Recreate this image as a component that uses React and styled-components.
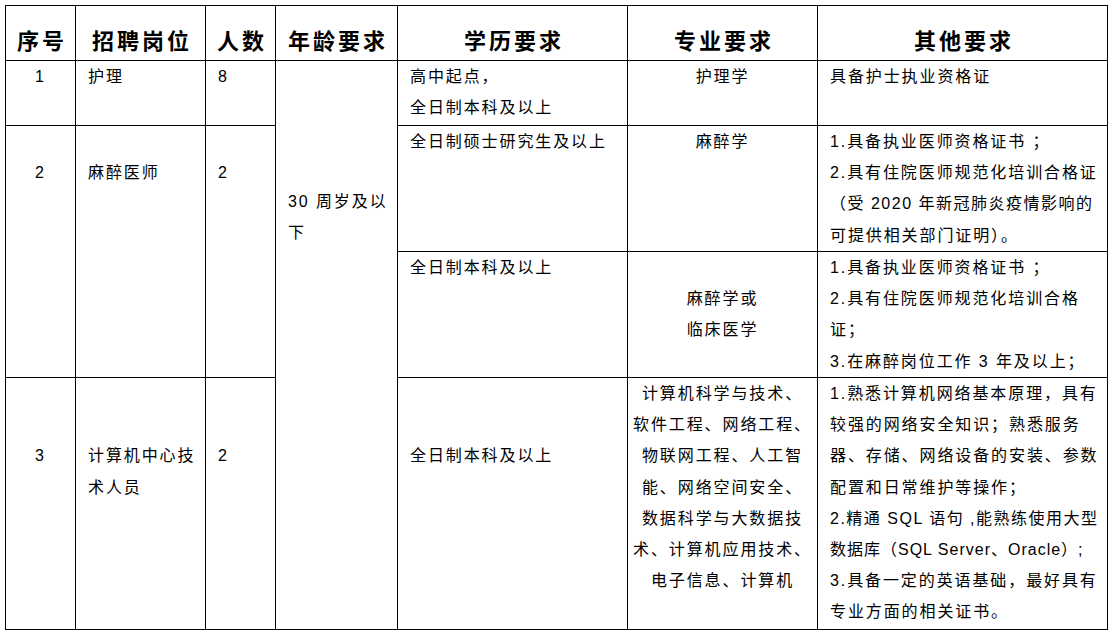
import React from "react";
import styled, { createGlobalStyle } from "styled-components";

const LINE = 31.2;

const GlobalStyle = createGlobalStyle`
  html, body { margin: 0; padding: 0; background: #fff; }
  body {
    font-family: "Liberation Sans", "Noto Sans CJK SC", sans-serif;
    color: #000;
  }
`;

const Table = styled.div`
  display: grid;
  grid-template-columns: 69px 129px 69px 121px 229px 189px 289px;
  grid-template-rows: 54px 64px 125px 125px 251px;
  gap: 1px;
  padding: 1px;
  background: #000;
  margin: 5px 0 0 5px;
  width: max-content;
`;

const HeadCell = styled.div`
  background: #fff;
  display: flex;
  justify-content: center;
  padding: 20px 0 0 3px;
  font-family: "Noto Sans CJK SC", sans-serif;
  font-weight: 700;
  font-size: 22px;
  line-height: 26px;
  letter-spacing: 3px;
`;

const Cell = styled.div`
  background: #fff;
  grid-column: ${(p) => p.$col};
  grid-row: ${(p) => p.$row};
  padding: ${(p) => (p.$skip || 0) * LINE}px ${(p) => (p.$center ? "0" : "12px")} 0;
  text-align: ${(p) => (p.$center ? "center" : "left")};
  font-size: 16px;
  line-height: ${LINE}px;
  white-space: nowrap;
  overflow: hidden;
`;

const Line = styled.div`
  letter-spacing: ${(p) => p.$ls ?? 1.9}px;
`;

const headers = ["序号", "招聘岗位", "人数", "年龄要求", "学历要求", "专业要求", "其他要求"];

const S = (text, ls) => ({ text, ls });

const cells = [
  // row 1
  { col: "1", row: "2", center: true, lines: ["1"] },
  { col: "2", row: "2", lines: ["护理"] },
  { col: "3", row: "2", lines: ["8"] },
  { col: "4", row: "2 / 6", skip: 4, lines: ["30 周岁及以", "下"] },
  { col: "5", row: "2", lines: ["高中起点，", "全日制本科及以上"] },
  { col: "6", row: "2", center: true, lines: ["护理学"] },
  { col: "7", row: "2", lines: ["具备护士执业资格证"] },
  // row 2
  { col: "1", row: "3 / 5", skip: 1, center: true, lines: ["2"] },
  { col: "2", row: "3 / 5", skip: 1, lines: ["麻醉医师"] },
  { col: "3", row: "3 / 5", skip: 1, lines: ["2"] },
  { col: "5", row: "3", lines: ["全日制硕士研究生及以上"] },
  { col: "6", row: "3", center: true, lines: ["麻醉学"] },
  {
    col: "7",
    row: "3",
    lines: [
      "1.具备执业医师资格证书 ；",
      "2.具有住院医师规范化培训合格证",
      S("（受 2020 年新冠肺炎疫情影响的", 1.5),
      "可提供相关部门证明）。",
    ],
  },
  { col: "5", row: "4", lines: ["全日制本科及以上"] },
  { col: "6", row: "4", skip: 1, center: true, lines: ["麻醉学或", "临床医学"] },
  {
    col: "7",
    row: "4",
    lines: [
      "1.具备执业医师资格证书 ；",
      "2.具有住院医师规范化培训合格",
      "证；",
      "3.在麻醉岗位工作 3 年及以上；",
    ],
  },
  // row 3
  { col: "1", row: "5", skip: 2, center: true, lines: ["3"] },
  { col: "2", row: "5", skip: 2, lines: ["计算机中心技", "术人员"] },
  { col: "3", row: "5", skip: 2, lines: ["2"] },
  { col: "5", row: "5", skip: 2, lines: ["全日制本科及以上"] },
  {
    col: "6",
    row: "5",
    center: true,
    lines: [
      "计算机科学与技术、",
      "软件工程、网络工程、",
      "物联网工程、人工智",
      "能、网络空间安全、",
      "数据科学与大数据技",
      "术、计算机应用技术、",
      "电子信息、计算机",
    ],
  },
  {
    col: "7",
    row: "5",
    lines: [
      "1.熟悉计算机网络基本原理，具有",
      "较强的网络安全知识；熟悉服务",
      "器、存储、网络设备的安装、参数",
      "配置和日常维护等操作；",
      S("2.精通 SQL 语句 ,能熟练使用大型", 1.5),
      S("数据库（SQL Server、Oracle）;", 1.0),
      "3.具备一定的英语基础，最好具有",
      "专业方面的相关证书。",
    ],
  },
];

export default function App() {
  return (
    <>
      <GlobalStyle />
      <Table>
        {headers.map((h) => (
          <HeadCell key={h}>{h}</HeadCell>
        ))}
        {cells.map((c, i) => (
          <Cell key={i} $col={c.col} $row={c.row} $skip={c.skip} $center={c.center}>
            {c.lines.map((l, j) =>
              typeof l === "string" ? (
                <Line key={j}>{l}</Line>
              ) : (
                <Line key={j} $ls={l.ls}>
                  {l.text}
                </Line>
              )
            )}
          </Cell>
        ))}
      </Table>
    </>
  );
}
